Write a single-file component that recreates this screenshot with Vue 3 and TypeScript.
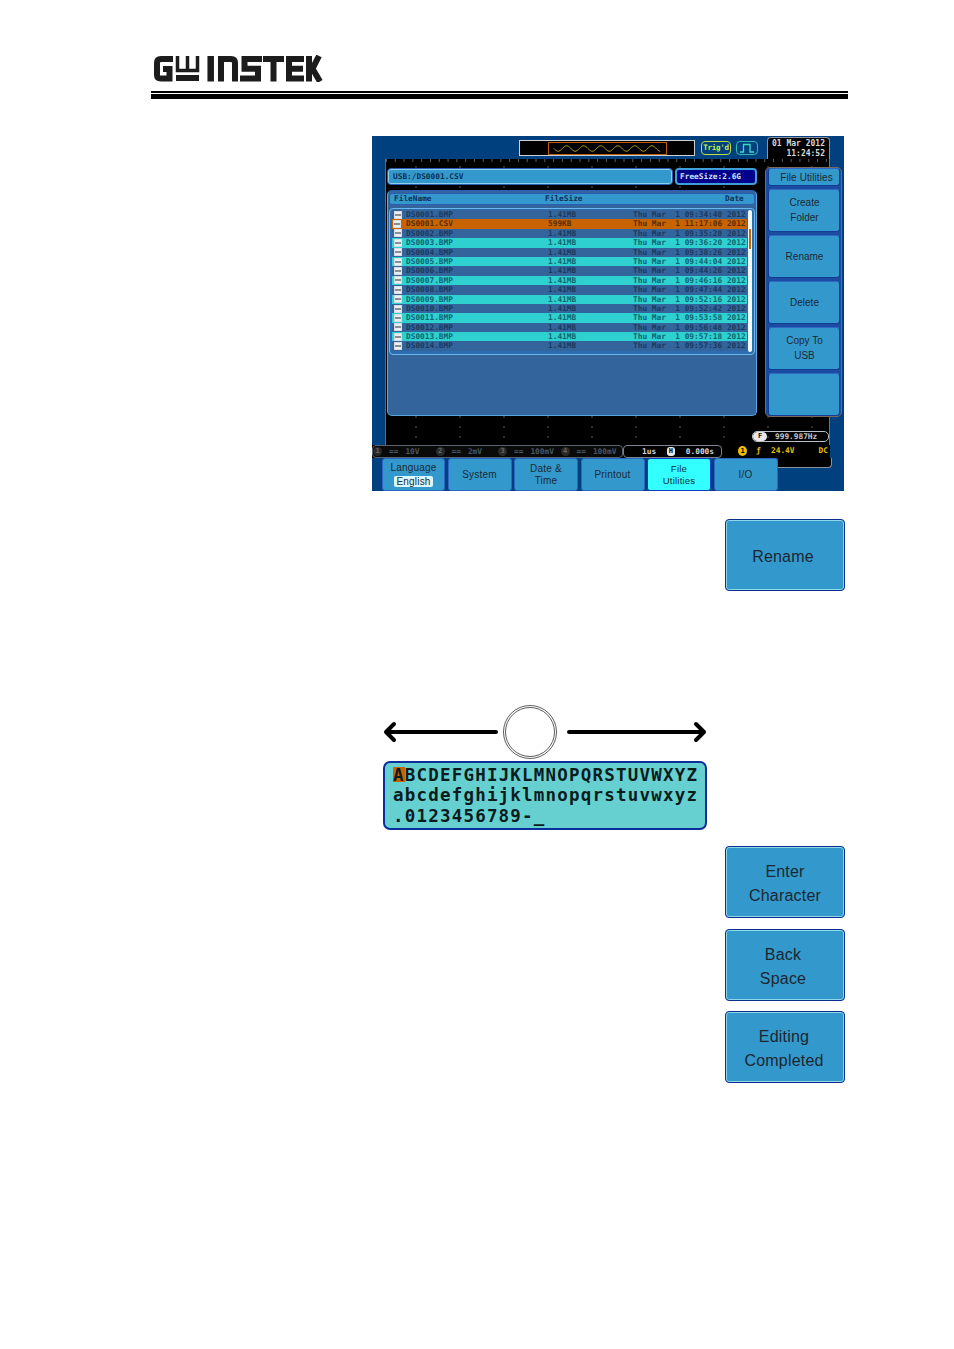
<script setup lang="ts">
interface FileRow {
  name: string
  size: string
  date: string
}

const times = [
  '09:34:40', '11:17:06', '09:35:20', '09:36:20', '09:38:26', '09:44:04', '09:44:26',
  '09:46:16', '09:47:44', '09:52:16', '09:52:42', '09:53:58', '09:56:48', '09:57:18', '09:57:36'
]

const names = [
  'DS0001.BMP', 'DS0001.CSV', 'DS0002.BMP', 'DS0003.BMP', 'DS0004.BMP', 'DS0005.BMP', 'DS0006.BMP',
  'DS0007.BMP', 'DS0008.BMP', 'DS0009.BMP', 'DS0010.BMP', 'DS0011.BMP', 'DS0012.BMP', 'DS0013.BMP', 'DS0014.BMP'
]

const files: FileRow[] = names.map((name, i) => ({
  name,
  size: i === 1 ? '599KB' : '1.41MB',
  date: `Thu Mar  1 ${times[i]} 2012`
}))

function rowClass(i: number) {
  if (i === 1) return 'row-selected'
  return i % 2 === 1 ? 'row-teal' : 'row-blue'
}

const channels = [
  { id: '1', value: '10V' },
  { id: '2', value: '2mV' },
  { id: '3', value: '100mV' },
  { id: '4', value: '100mV' }
]

const menu = [
  ['Create', 'Folder'],
  ['Rename'],
  ['Delete'],
  ['Copy To', 'USB'],
  []
]

const tabs = [
  { lines: ['System'], active: false },
  { lines: ['Date &', 'Time'], active: false },
  { lines: ['Printout'], active: false },
  { lines: ['File', 'Utilities'], active: true },
  { lines: ['I/O'], active: false }
]

const keys = [
  { lines: ['Enter', 'Character'], gap: 'gap-a' },
  { lines: ['Back', 'Space'], gap: 'gap-b' },
  { lines: ['Editing', 'Completed'], gap: 'gap-c' }
]

// overview trace inside the memory bar
const wave = Array.from({ length: 117 }, (_, i) => {
  const y = 6 + Math.sin(i / 18.6 * Math.PI * 2) * 3
  return `${i + 0.5},${y.toFixed(2)}`
}).join(' ')
</script>

<template>
  <div class="page">
    <header class="head">
      <svg class="logo" width="170" height="27" viewBox="0 0 170 27">
        <g fill="none" stroke="#1c1c1c" stroke-width="6">
          <path d="M20 4H8Q4 4 4 8V20Q4 23.5 8 23.5H16.5V14H10" />
          <path d="M57.7 1V26.5" stroke-width="6.5" />
          <path d="M68 26.5V4H78Q82 4 82 8V26.5" />
          <path d="M109 4H91.5V13.7H105V23.5H87" />
          <path d="M110 4H131M120.5 4V26.5" />
          <path d="M151 4H136V23.5H151M136 13.7H150" />
          <path d="M156 1V26.5M166 1L159.500 13.7L167 26.5" />
        </g>
        <path d="M24.5 1V15.5H44.5V1M34.5 1V15" fill="none" stroke="#1c1c1c" stroke-width="3.5" />
        <rect x="23" y="20" width="23" height="6" fill="#1c1c1c" />
      </svg>
      <div class="rule-thin"></div>
      <div class="rule-thick"></div>
    </header>

    <main class="content">
      <section class="scope">
        <div class="top-strip">
          <div class="memory">
            <svg width="118" height="12" viewBox="0 0 118 12" class="memory-win">
              <polyline :points="wave" fill="none" stroke="#c8a820" stroke-width="1" />
            </svg>
          </div>
          <div class="trig">Trig'd</div>
          <div class="edge">
            <svg width="16" height="10" viewBox="0 0 16 10">
              <path d="M1 9H4.5V1.5H11V9H15" fill="none" stroke="#3fd8c8" stroke-width="1.3" />
            </svg>
          </div>
          <div class="clock">
            <span>01 Mar 2012</span>
            <span>11:24:52</span>
          </div>
        </div>

        <div class="graticule">
          <div class="path-row">
            <div class="path-bar">USB:/DS0001.CSV</div>
            <div class="free">FreeSize:2.6G</div>
          </div>
          <div class="panel">
            <div class="cols">
              <span class="col-name">FileName</span>
              <span class="col-size">FileSize</span>
              <span class="col-date">Date</span>
            </div>
            <div class="list">
              <div
                v-for="(file, i) in files"
                :key="file.name"
                class="row"
                :class="rowClass(i)"
              >
                <span class="doc"></span>
                <span class="cell-name">{{ file.name }}</span>
                <span class="cell-size">{{ file.size }}</span>
                <span class="cell-date">{{ file.date }}</span>
              </div>
              <div class="scroll"><div class="thumb"></div></div>
            </div>
          </div>
        </div>

        <div class="status">
          <div class="channels">
            <div v-for="ch in channels" :key="ch.id" class="channel">
              <span class="ch-id">{{ ch.id }}</span>
              <span class="ch-bars">==</span>
              <span>{{ ch.value }}</span>
            </div>
          </div>
          <div class="timebase">
            <span>1us</span>
            <span class="h-mark">H</span>
            <span>0.000s</span>
          </div>
          <div class="trigger">
            <span class="trig-src">1</span>
            <span class="trig-slope">&#402;</span>
            <span>24.4V</span>
            <span class="trig-dc">DC</span>
          </div>
        </div>

        <div class="tabs">
          <div class="tab tab-lang">
            <span>Language</span>
            <span class="lang-value">English</span>
          </div>
          <div
            v-for="tab in tabs"
            :key="tab.lines[0]"
            class="tab"
            :class="{ 'tab-active': tab.active }"
          >
            <span v-for="line in tab.lines" :key="line">{{ line }}</span>
          </div>
          <div class="tab-tail"></div>
        </div>

        <!-- these sit on top of the graticule -->
        <aside class="side">
          <div class="side-title">File Utilities</div>
          <div v-for="(item, i) in menu" :key="i" class="side-item">
            <span v-for="line in item" :key="line">{{ line }}</span>
          </div>
        </aside>
        <div class="freq">
          <span class="freq-mark">F</span>
          <span>999.987Hz</span>
        </div>
      </section>

      <div class="key key-rename"><span>Rename</span></div>

      <svg class="dial" width="324" height="56" viewBox="0 0 324 56">
        <g fill="none" stroke="#000" stroke-width="4" stroke-linecap="round" stroke-linejoin="round">
          <path d="M113 27H3M11 19L3 27L11 35" />
          <path d="M186 27H321M313 19L321 27L313 35" />
        </g>
        <circle cx="147" cy="27" r="26.5" fill="none" stroke="#333" stroke-width="0.8" />
        <circle cx="147" cy="27" r="24.5" fill="none" stroke="#333" stroke-width="0.8" />
      </svg>

      <div class="chars">
        <div class="char-line"><span class="char-cursor">A</span>BCDEFGHIJKLMNOPQRSTUVWXYZ</div>
        <div class="char-line">abcdefghijklmnopqrstuvwxyz</div>
        <div class="char-line">.0123456789-_</div>
      </div>

      <div v-for="key in keys" :key="key.lines[0]" class="key" :class="key.gap">
        <span v-for="line in key.lines" :key="line">{{ line }}</span>
      </div>
    </main>
  </div>
</template>

<style>
html,
body {
  margin: 0;
  background: #fff;
}
</style>

<style scoped>
.page {
  width: 954px;
  height: 1349px;
  background: #fff;
  overflow: hidden;
  font-family: "Liberation Sans", Arial, sans-serif;
}

.head {
  display: flex;
  flex-direction: column;
  padding: 55px 106px 0 151px;
}

.logo {
  display: block;
  margin-left: 2px;
}

.rule-thin {
  height: 2px;
  margin-top: 9px;
  background: #000;
}

.rule-thick {
  height: 5px;
  margin-top: 1px;
  background: #000;
}

.content {
  display: flex;
  flex-direction: column;
  align-items: flex-start;
  margin: 37px 0 0 372px;
}

/* scope screen */
.scope {
  position: relative;
  width: 472px;
  height: 355px;
  background: #00407f;
  overflow: hidden;
  font-family: "DejaVu Sans Mono", monospace;
}

.top-strip {
  display: flex;
  align-items: center;
  height: 23px;
  padding-left: 147px;
}

.memory {
  width: 176px;
  height: 16px;
  box-sizing: border-box;
  padding: 1px 0 0 28px;
  background: #000;
  border: 1px solid #c8d0d8;
}

.memory-win {
  display: block;
  box-sizing: border-box;
  width: 119px;
  height: 13px;
  border: 1px solid #c05a00;
}

.trig {
  width: 30px;
  height: 14px;
  box-sizing: border-box;
  margin-left: 6px;
  border: 1px solid #b8e040;
  border-radius: 4px;
  color: #c4f040;
  font-size: 7.5px;
  font-weight: bold;
  letter-spacing: -0.3px;
  line-height: 12px;
  text-align: center;
}

.edge {
  display: flex;
  align-items: center;
  justify-content: center;
  width: 22px;
  height: 14px;
  box-sizing: border-box;
  margin-left: 5px;
  border: 1px solid #2fb8b0;
  border-radius: 4px;
}

.clock {
  display: flex;
  flex-direction: column;
  align-items: flex-end;
  width: 63px;
  height: 22px;
  box-sizing: border-box;
  margin-left: 9px;
  padding: 1px 4px 0 0;
  background: #000;
  border: 1px solid #8a94a0;
  border-bottom: 0;
  border-radius: 4px 4px 0 0;
  color: #d8d8d8;
  font-size: 8px;
  font-weight: bold;
  line-height: 10px;
}

.graticule {
  width: 445px;
  height: 286px;
  box-sizing: border-box;
  margin-left: 13px;
  padding: 8px 0 0 1px;
  background-color: #000;
  background-image:
    linear-gradient(90deg, #5e5e5e 1px, transparent 1px),
    radial-gradient(circle, #2e2e2e 0.7px, transparent 1px);
  background-size: 8.8px 3px, 44px 10px;
  background-position: 0 0, 8px 3px;
  background-repeat: repeat-x, repeat;
  border-left: 1px solid #5a6a80;
  border-right: 1px solid #6a7480;
}

.path-row {
  display: flex;
  gap: 2px;
  width: 370px;
  height: 17px;
  margin-top: 1px;
}

.path-bar {
  flex: 1;
  box-sizing: border-box;
  padding-left: 5px;
  background: #3399cc;
  border: 1px solid #2b5cb8;
  box-shadow: inset 0 0 0 1px #8fd0ee;
  border-radius: 4px;
  color: #0e2f58;
  font-size: 7.8px;
  font-weight: bold;
  line-height: 15px;
}

.free {
  width: 82px;
  box-sizing: border-box;
  padding-left: 3px;
  background: #00008c;
  border: 2px solid #3f9fd8;
  border-radius: 4px;
  color: #d8e8ff;
  font-size: 7.8px;
  font-weight: bold;
  line-height: 13px;
}

.panel {
  display: flex;
  flex-direction: column;
  gap: 3px;
  width: 370px;
  height: 226px;
  box-sizing: border-box;
  margin-top: 5px;
  padding: 2px 1px 0;
  background: #33659c;
  border-radius: 5px;
  border: 1px solid #5aa8e0;
  border-top-color: #2b5cb8;
}

.cols {
  position: relative;
  flex: none;
  height: 12px;
  box-sizing: border-box;
  background: #3399cc;
  border: 1px solid #2b5cb8;
  border-radius: 3px;
  color: #0e2f58;
  font-size: 7.8px;
  font-weight: bold;
  line-height: 10px;
}

.cols span {
  position: absolute;
  top: 0;
}

.col-name {
  left: 4px;
}

.col-size {
  left: 155px;
}

.col-date {
  left: 335px;
}

.list {
  position: relative;
  flex: none;
  width: 366px;
  height: 147px;
  box-sizing: border-box;
  padding: 1px 0 0 2px;
  border: 1px solid #6ab8e8;
  border-radius: 4px;
  background: #2e6cb0;
}

.row {
  display: flex;
  align-items: center;
  width: 355px;
  height: 9.4px;
  font-size: 7.8px;
  font-weight: bold;
  line-height: 9.4px;
  white-space: pre;
}

.row-blue {
  background: #33659c;
  color: #1c3a5e;
}

.row-teal {
  background: #2fd0d0;
  color: #0e6670;
}

.row-selected {
  background: #c86400;
  color: #5a2c00;
}

.doc {
  flex: none;
  width: 8px;
  height: 8px;
  box-sizing: border-box;
  margin-left: 2px;
  border: 1px solid #d8dce0;
  background: linear-gradient(#eceff2 0 40%, #8a8f94 40% 60%, #eceff2 60%);
}

.row-selected .doc {
  margin-left: 1px;
  margin-right: 1px;
}

.cell-name {
  width: 142px;
  margin-left: 4px;
}

.cell-size {
  width: 85px;
}

.scroll {
  position: absolute;
  top: 1px;
  right: 2px;
  width: 4px;
  height: 142px;
  background: #f4f8ff;
  border-radius: 2px;
}

.thumb {
  width: 2px;
  height: 20px;
  margin: 19px 0 0 1px;
  background: #c86400;
}

.status {
  display: flex;
  width: 458px;
  height: 13px;
  background: #000;
}

.channels {
  display: flex;
  align-items: center;
  flex: none;
  width: 251px;
  box-sizing: border-box;
  background: #0a0a0a;
  border: 1px solid #5a6470;
  border-radius: 4px;
  color: #4c5660;
  font-size: 7.8px;
  font-weight: bold;
  line-height: 11px;
}

.channel {
  display: flex;
  align-items: center;
  gap: 7px;
  flex: none;
  width: 62.5px;
}

.ch-id {
  width: 9px;
  height: 9px;
  border-radius: 50%;
  background: #2a2a2a;
  color: #666;
  font-size: 7px;
  line-height: 9px;
  text-align: center;
}

.timebase {
  display: flex;
  align-items: center;
  justify-content: space-between;
  flex: none;
  width: 99px;
  box-sizing: border-box;
  padding: 0 7px 0 18px;
  border: 1px solid #7a8490;
  border-radius: 4px;
  color: #d8d8d8;
  font-size: 7.8px;
  font-weight: bold;
}

.h-mark {
  width: 8px;
  height: 9px;
  border-radius: 3px;
  background: #e8e8e8;
  color: #000;
  font-size: 7px;
  font-weight: bold;
  line-height: 9px;
  text-align: center;
}

.trigger {
  display: flex;
  align-items: center;
  flex: 1;
  padding: 0 2px 2px 16px;
  color: #e8c010;
  font-size: 7.8px;
  font-weight: bold;
  line-height: 10px;
}

.trig-src {
  width: 9px;
  height: 10px;
  border-radius: 50%;
  background: #f0c000;
  color: #000;
  font-size: 7px;
  line-height: 10px;
  text-align: center;
}

.trig-slope {
  width: 15px;
  margin-left: 9px;
}

.trig-dc {
  margin-left: auto;
}

.tabs {
  display: flex;
  align-items: flex-start;
  gap: 2.5px;
  height: 33px;
  padding-left: 10px;
}

.tab {
  display: flex;
  flex-direction: column;
  align-items: center;
  justify-content: center;
  flex: none;
  width: 64px;
  height: 33px;
  box-sizing: border-box;
  padding-top: 1px;
  background: #3399cc;
  border: 1px solid #2b66c8;
  border-radius: 3px;
  color: #1c2a34;
  font-family: "Liberation Sans", Arial, sans-serif;
  font-size: 10px;
  letter-spacing: 0.2px;
  line-height: 12.5px;
}

.tab-lang {
  width: 63px;
  padding-top: 0;
}

.tab-active {
  background: #33ffff;
  border-color: #0f3ec0;
  color: #10323c;
  font-size: 9.6px;
}

.lang-value {
  margin-top: 1px;
  padding: 0 2px;
  background: #d8f8ff;
  border-radius: 2px;
  line-height: 11.5px;
}

.tab-tail {
  flex: none;
  width: 54px;
  height: 10px;
  box-sizing: border-box;
  margin-left: -2.5px;
  background: #000;
  border-right: 1px solid #8a94a0;
  border-bottom: 1px solid #8a94a0;
  border-radius: 0 0 4px 0;
}

.side {
  position: absolute;
  top: 31px;
  left: 393px;
  display: flex;
  flex-direction: column;
  gap: 2.5px;
  width: 77px;
  height: 250px;
  box-sizing: border-box;
  padding: 0 1px 0 2px;
  background: #1a4ca0;
  border: 1px solid #7c6a58;
  border-radius: 5px;
}

.side-title,
.side-item {
  display: flex;
  flex-direction: column;
  align-items: center;
  justify-content: center;
  flex: none;
  box-sizing: border-box;
  background: #3399cc;
  border: 1px solid #123c96;
  border-top-color: #2f66c8;
  border-radius: 3px;
  color: #1c2a34;
  font-family: "Liberation Sans", Arial, sans-serif;
  font-size: 10px;
  line-height: 15px;
}

.side-title {
  height: 18px;
  padding-left: 5px;
  letter-spacing: 0.1px;
}

.side-item {
  height: 43.5px;
  padding-left: 1px;
}

.freq {
  position: absolute;
  top: 295px;
  left: 380px;
  display: flex;
  align-items: center;
  gap: 8px;
  width: 77px;
  height: 11px;
  box-sizing: border-box;
  border: 1px solid #b8c0c8;
  border-radius: 5px;
  color: #c8c8c8;
  font-size: 7.8px;
  font-weight: bold;
}

.freq-mark {
  width: 14px;
  height: 9px;
  border-radius: 5px;
  background: #e8e8e8;
  color: #000;
  font-size: 7px;
  font-weight: bold;
  line-height: 9px;
  text-align: center;
}

/* standalone keys */
.key {
  display: flex;
  flex-direction: column;
  align-items: center;
  justify-content: center;
  flex: none;
  width: 120px;
  height: 72px;
  box-sizing: border-box;
  margin-left: 353px;
  padding-top: 4px;
  background: #3399cc;
  border: 1px solid #0a2f8c;
  box-shadow: inset 0 0 0 1px #8fd8e8;
  border-radius: 4px;
  color: #1c2630;
  font-size: 16px;
  letter-spacing: 0.2px;
  line-height: 24.5px;
}

.key-rename {
  margin-top: 28px;
  padding-right: 4px;
}

.gap-a {
  margin-top: 16px;
}

.gap-b {
  margin-top: 11px;
  padding-right: 4px;
}

.gap-c {
  margin-top: 10px;
  padding-right: 2px;
}

.dial {
  display: block;
  flex: none;
  margin: 114px 0 0 11px;
}

.chars {
  flex: none;
  width: 324px;
  height: 69px;
  box-sizing: border-box;
  margin: 0 0 0 11px;
  padding: 2px 0 0 8px;
  background: #66d0d0;
  border: 2px solid #0a2f9c;
  border-radius: 7px;
  color: #0c1c1c;
  font-family: "DejaVu Sans Mono", monospace;
  font-size: 17.5px;
  font-weight: bold;
  letter-spacing: 1.2px;
  line-height: 20.4px;
  white-space: pre;
}

.char-line {
  height: 20.4px;
}

.char-cursor {
  background: linear-gradient(transparent 2px, #c86400 2px, #c86400 17px, transparent 17px);
}
</style>
